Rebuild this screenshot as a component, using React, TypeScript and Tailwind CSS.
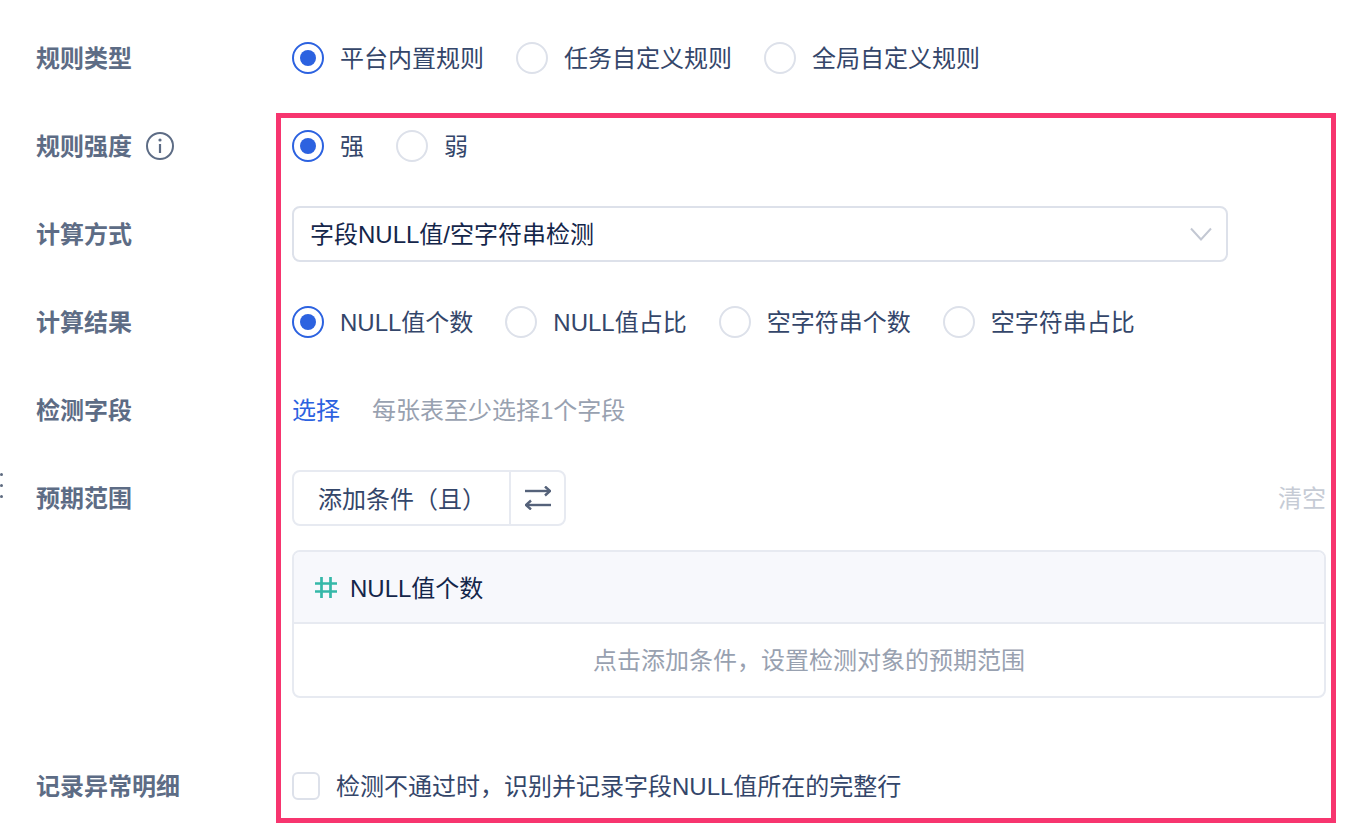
const fontStack = "font-['Liberation_Sans','Noto_Sans_CJK_SC',sans-serif]"

const Radio = ({ label, checked }: { label: string; checked?: boolean }) => (
  <label className="flex items-center gap-4">
    <span
      className={
        checked
          ? "flex h-8 w-8 items-center justify-center rounded-full border-2 border-[#2c62e0] bg-white"
          : "h-8 w-8 rounded-full border-2 border-[#dde1ea] bg-white"
      }>
      {checked && <span className="h-4 w-4 rounded-full bg-[#2c62e0]" />}
    </span>
    <span className="pt-[1px]">{label}</span>
  </label>
)

const Row = ({ label, children, icon }: { label: string; children: React.ReactNode; icon?: React.ReactNode }) => (
  <div className="flex items-start">
    <div className="flex h-[88px] w-[292px] shrink-0 items-center gap-[14px] pl-9 font-bold text-[#5d6c85]">
      <span className="pt-[1px]">{label}</span>
      {icon}
    </div>
    <div className="min-h-[88px] w-[1034px] shrink-0">{children}</div>
  </div>
)

const InfoIcon = () => (
  <svg width="28" height="28" viewBox="0 0 28 28" fill="none" stroke="#5d6c85" strokeWidth="2">
    <circle cx="14" cy="14" r="13" />
    <path d="M14 12v9" strokeWidth="2.2" />
    <circle cx="14" cy="8" r="1.6" fill="#5d6c85" stroke="none" />
  </svg>
)

const Chevron = () => (
  <svg width="22" height="14" viewBox="0 0 22 14" fill="none" stroke="#c3c8d3" strokeWidth="2">
    <path d="M1 1.5l10 11 10-11" />
  </svg>
)

const SwapIcon = () => (
  <svg width="26" height="24" viewBox="0 0 26 24" fill="none" stroke="#55627a" strokeWidth="2.4">
    <path d="M0 5h24" />
    <path d="M20 0.5l5 4.5-5 4.5" />
    <path d="M26 19H2" />
    <path d="M6 14.5L1 19l5 4.5" />
  </svg>
)

const HashIcon = () => (
  <svg width="22" height="21" viewBox="0 0 22 21" fill="none" stroke="#35b8a8" strokeWidth="2.7">
    <path d="M6.5 0v21M15.5 0v21M0 6.5h22M0 14.5h22" />
  </svg>
)

export default function App() {
  return (
    <div className={`relative h-[838px] w-[1360px] overflow-hidden bg-white pt-[14px] text-[24px] leading-8 text-[#34466a] ${fontStack}`}>
      <Row label="规则类型">
        <div className="flex h-[88px] items-center gap-8">
          <Radio label="平台内置规则" checked />
          <Radio label="任务自定义规则" />
          <Radio label="全局自定义规则" />
        </div>
      </Row>
      <Row label="规则强度" icon={<InfoIcon />}>
        <div className="flex h-[88px] items-center gap-8">
          <Radio label="强" checked />
          <Radio label="弱" />
        </div>
      </Row>
      <Row label="计算方式">
        <div className="flex h-[88px] items-center">
          <div className="flex h-14 w-[936px] items-center justify-between rounded-lg border-2 border-[#dde1ea] pl-4 pr-[14px] text-[#14264a]">
            <span className="pt-[1px]">字段NULL值/空字符串检测</span>
            <Chevron />
          </div>
        </div>
      </Row>
      <Row label="计算结果">
        <div className="flex h-[88px] items-center gap-8">
          <Radio label="NULL值个数" checked />
          <Radio label="NULL值占比" />
          <Radio label="空字符串个数" />
          <Radio label="空字符串占比" />
        </div>
      </Row>
      <Row label="检测字段">
        <div className="flex h-[88px] items-center gap-8">
          <span className="pt-[1px] text-[#2c62e0]">选择</span>
          <span className="pt-[1px] text-[#98a1b0]">每张表至少选择1个字段</span>
        </div>
      </Row>
      <Row label="预期范围">
        <div className="pt-4 pb-11">
          <div className="flex items-center justify-between">
            <div className="flex h-14 w-[274px] rounded-lg border-2 border-[#e7eaf1]">
              <div className="flex w-[217px] items-center border-r-2 border-[#e7eaf1] pl-6 pt-1">添加条件（且）</div>
              <div className="flex flex-1 items-center justify-center">
                <SwapIcon />
              </div>
            </div>
            <span className="pt-[1px] text-[#c6cbd5]">清空</span>
          </div>
          <div className="mt-6 h-[148px] overflow-hidden rounded-lg border-2 border-[#e7eaf1]">
            <div className="flex h-[72px] items-center gap-[13px] border-b-2 border-[#e7eaf1] bg-[#f7f8fc] pl-[21px] text-[#14264a]">
              <HashIcon />
              <span className="pt-1">NULL值个数</span>
            </div>
            <div className="flex h-[72px] items-center justify-center pt-[1px] text-[#98a1b0]">
              点击添加条件，设置检测对象的预期范围
            </div>
          </div>
        </div>
      </Row>
      <Row label="记录异常明细">
        <div className="flex h-[88px] items-center gap-4">
          <span className="h-7 w-7 rounded-md border-2 border-[#dde1ea]" />
          <span className="pt-[1px]">检测不通过时，识别并记录字段NULL值所在的完整行</span>
        </div>
      </Row>
      {/* cut-off drag handle on the left edge */}
      <div className="absolute left-0 top-[473px] flex flex-col gap-[8px]">
        <span className="h-[3px] w-[3px] rounded-full bg-[#5e6b80]" />
        <span className="h-[3px] w-[3px] rounded-full bg-[#5e6b80]" />
        <span className="h-[3px] w-[3px] rounded-full bg-[#5e6b80]" />
      </div>
      {/* annotation frame */}
      <div className="pointer-events-none absolute left-[276px] top-[113px] h-[710px] w-[1060px] border-[5px] border-[#f7356f]" />
    </div>
  )
}
